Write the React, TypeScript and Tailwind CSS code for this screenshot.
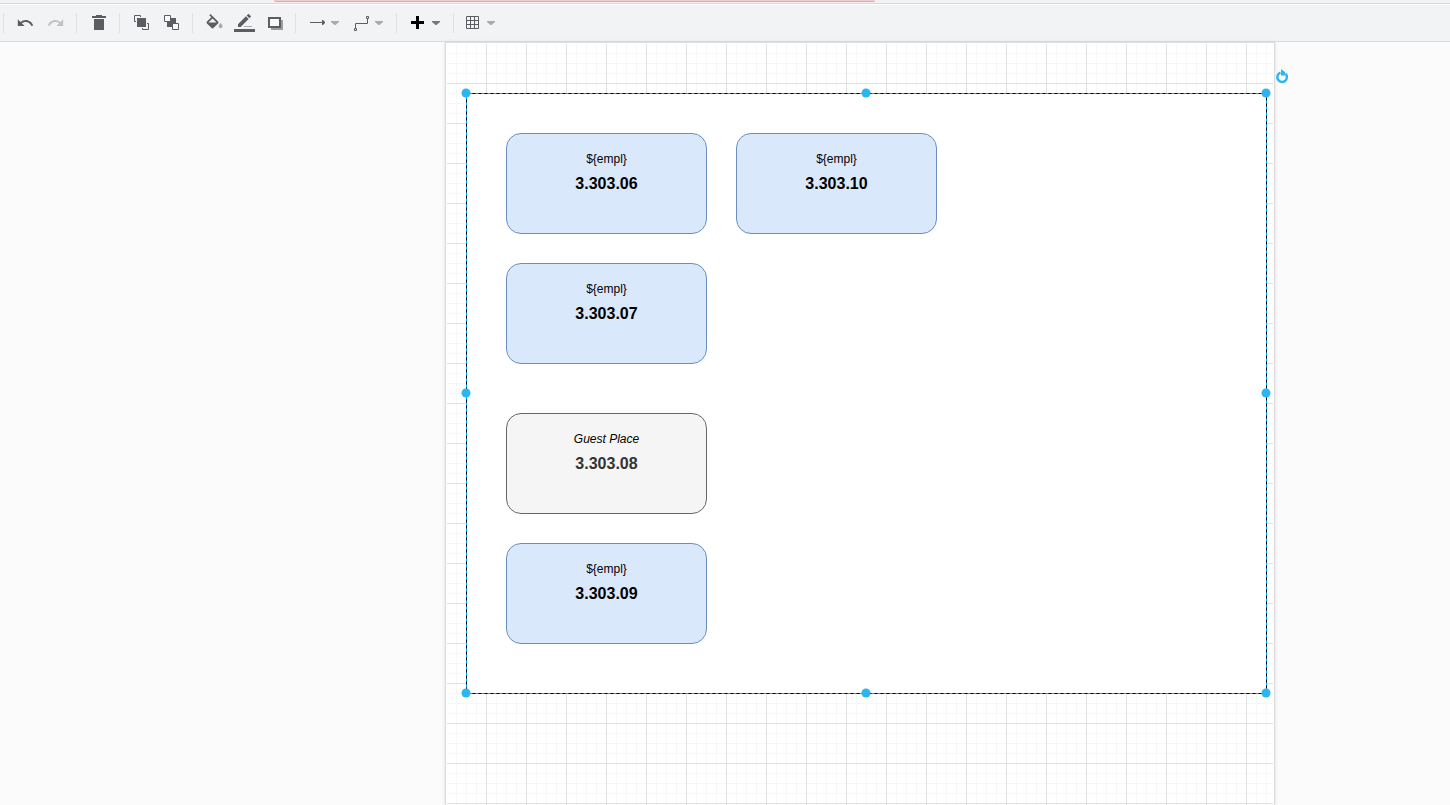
import React from "react";

const INK = "#5c5d60";
const MUTED = "#a9aaac";

type ToolProps = {
  label: string;
  x: number;
  wide?: boolean;
  disabled?: boolean;
  children: React.ReactNode;
};

// Icons share one coordinate system: x runs along the toolbar, y from the top of the window.
function Tool({ label, x, wide, disabled, children }: ToolProps) {
  const width = wide ? 44 : 30;
  return (
    <button
      type="button"
      aria-label={label}
      title={label}
      disabled={disabled}
      className={wide ? "h-[30px] w-11 shrink-0" : "h-[30px] w-[30px] shrink-0"}
    >
      <svg viewBox={`${x} 8 ${width} 30`} className="block h-full w-full" fill={INK}>
        {children}
      </svg>
    </button>
  );
}

function Divider() {
  return <span className="ml-[5px] mr-[7px] h-5 w-px shrink-0 bg-[#dfe0e2]" />;
}

function Caret({ x, color = MUTED }: { x: number; color?: string }) {
  return <path d={`M${x} 21h8v1l-3.5 3h-1l-3.5-3z`} fill={color} />;
}

function Toolbar() {
  return (
    <div
      role="toolbar"
      aria-label="Format"
      className="flex h-[37px] items-center border-b border-[#d8d9dc] bg-[#f1f3f4] pl-[3px]"
    >
      <span className="mr-[7px] h-5 w-px shrink-0 bg-[#dfe0e2]" />
      <Tool label="Undo" x={11}>
        <path
          transform="translate(16.3 14) scale(.75)"
          d="M12.5 8c-2.65 0-5.05.99-6.9 2.6L2 7v9h9l-3.62-3.62c1.39-1.16 3.16-1.88 5.12-1.88 3.54 0 6.55 2.31 7.6 5.5l2.37-.78C21.08 11.03 17.15 8 12.5 8z"
        />
      </Tool>
      <Tool label="Redo" x={41} disabled>
        <path
          transform="translate(46.7 14) scale(.75)"
          fill="#c1c2c4"
          d="M18.4 10.6C16.55 8.99 14.15 8 11.5 8c-4.65 0-8.58 3.03-9.96 7.22L3.9 16c1.05-3.19 4.05-5.5 7.6-5.5 1.95 0 3.73.72 5.12 1.88L13 16h9V7l-3.6 3.6z"
        />
      </Tool>
      <Divider />
      <Tool label="Delete" x={84}>
        <path d="M96 16v-1h6v1h4v2H92v-2zM94 19h10v11H94z" />
      </Tool>
      <Divider />
      <Tool label="To Front" x={127}>
        <path d="M137 18h9v9h-9z" />
        <path
          d="M140.500 17v-1.500h-6v6h1.500M147 23.500h1.500v6h-6V28"
          fill="none"
          stroke={INK}
        />
      </Tool>
      <Tool label="To Back" x={157}>
        <path d="M167 18h9v9h-9z" />
        <path d="M164.500 15.500h6v6h-6zM172.500 23.500h6v6h-6z" fill="#f8f9fa" stroke={INK} />
      </Tool>
      <Divider />
      <Tool label="Fill Color" x={200}>
        <g transform="translate(204 14) scale(.85)">
          <path d="M16.56 8.94L7.62 0 6.21 1.41l2.38 2.38-5.15 5.15c-.59.59-.59 1.54 0 2.12l5.5 5.5c.29.29.68.44 1.06.44s.77-.15 1.06-.44l5.5-5.5c.59-.58.59-1.53 0-2.12zM5.21 10L10 5.21 14.79 10H5.21z" />
          <path
            fill={MUTED}
            d="M19.500 10.500s-2.400 2.400-2.400 4c0 1.300 1.100 2.200 2.400 2.200s2.400-.9 2.400-2.200c0-1.600-2.400-4-2.400-4z"
          />
        </g>
      </Tool>
      <Tool label="Line Color" x={230}>
        <path
          transform="translate(235.800 11.900) scale(.72)"
          d="M3 17.250V21h3.750L17.810 9.940l-3.750-3.750L3 17.250zM20.710 7.040a1 1 0 0 0 0-1.410l-2.340-2.340a1 1 0 0 0-1.410 0l-1.830 1.830 3.750 3.750 1.830-1.830z"
        />
        <path d="M244 26h8v1h-8z" fill={MUTED} />
        <path d="M234 29h21v3h-21z" />
      </Tool>
      <Tool label="Shadow" x={260}>
        <path d="M271 20h12v10h-12z" fill="#9c9d9f" />
        <path d="M269 18h11v9h-11z" fill="#f8f9fa" stroke={INK} strokeWidth="2" />
      </Tool>
      <Divider />
      <Tool label="Connection" x={303} wide>
        <path d="M310 22h12v-2h1l2 2v1l-2 2h-1v-2h-12z" />
        <Caret x={331} />
      </Tool>
      <Tool label="Waypoints" x={347} wide>
        <path
          d="M354.500 28.500h2v2h-2zM355.500 28v-4.500h12V19M366.500 16.500h2v2h-2z"
          fill="none"
          stroke={INK}
        />
        <Caret x={375} />
      </Tool>
      <Divider />
      <Tool label="Insert" x={404} wide>
        <path d="M416 16h3v5h5v3h-5v5h-3v-5h-5v-3h5z" fill="#000" />
        <Caret x={432} color="#77787a" />
      </Tool>
      <Divider />
      <Tool label="Table" x={461} wide>
        <path
          d="M466.500 16.500h12v12h-12zM470.500 16v12M474.500 16v12M466 20.500h12M466 24.500h12"
          fill="none"
          stroke={INK}
        />
        <Caret x={487} />
      </Tool>
    </div>
  );
}

type Place = { code: string; title: string; guest?: boolean; position: string };

const places: Place[] = [
  { code: "3.303.06", title: "${empl}", position: "left-10 top-10" },
  { code: "3.303.10", title: "${empl}", position: "left-[270px] top-10" },
  { code: "3.303.07", title: "${empl}", position: "left-10 top-[170px]" },
  { code: "3.303.08", title: "Guest Place", guest: true, position: "left-10 top-80" },
  { code: "3.303.09", title: "${empl}", position: "left-10 top-[450px]" },
];

function PlaceCard({ place }: { place: Place }) {
  const tone = place.guest
    ? "border-[#666666] bg-[#f5f5f5] text-[#333333]"
    : "border-[#6c8ebf] bg-[#dae8fc] text-black";
  return (
    <div
      className={`absolute flex h-[101px] w-[201px] flex-col items-center gap-[9px] rounded-[15px] border pt-[18px] ${tone} ${place.position}`}
    >
      <span
        className={
          place.guest
            ? "text-[12px] leading-[14px] text-black italic"
            : "text-[12px] leading-[14px]"
        }
      >
        {place.title}
      </span>
      <span className="text-[16px] leading-[18px] font-bold">{place.code}</span>
    </div>
  );
}

const handles = [
  "left-0 top-0",
  "left-1/2 top-0",
  "left-full top-0",
  "left-0 top-1/2",
  "left-full top-1/2",
  "left-0 top-full",
  "left-1/2 top-full",
  "left-full top-full",
];

function Selection() {
  return (
    <div className="absolute left-[19px] top-[49px] h-[600px] w-[800px] bg-white">
      {places.map((place) => (
        <PlaceCard key={place.code} place={place} />
      ))}
      <svg viewBox="0 0 801 601" className="absolute left-0 top-0 h-[601px] w-[801px]" fill="none">
        <rect x=".5" y=".5" width="800" height="600" stroke="#00a8ff" />
        <path
          d="M.5.5h800v600M.5.5v600h800"
          stroke="#000"
          strokeDasharray="3 3"
        />
      </svg>
      {handles.map((position) => (
        <span
          key={position}
          className={`absolute size-[9px] -translate-x-1/2 -translate-y-1/2 rounded-full bg-[#29b6f2] ${position}`}
        />
      ))}
      <button
        type="button"
        aria-label="Rotate"
        className="absolute -top-6 left-[809px] h-[15px] w-[14px]"
      >
        <svg viewBox="0 0 14 15" className="block h-full w-full">
          <path
            d="M10.500 4.700A4.800 4.800 0 1 1 5.500 3.600"
            fill="none"
            stroke="#29b6f2"
            strokeWidth="2.400"
          />
          <path d="M6 0l4 3v3.500H6z" fill="#29b6f2" />
        </svg>
      </button>
    </div>
  );
}

export default function App() {
  return (
    <div className="flex h-screen min-h-[720px] flex-col overflow-hidden bg-[#fbfbfb] font-['Liberation_Sans',Arial,sans-serif]">
      <header>
        <div className="flex h-1 items-start border-b border-[#d8d9dc] bg-[#f1f3f4] pl-[18.9%]">
          <span className="h-0.5 w-[601px] rounded-b-xs border-b border-[#e5a3aa] bg-[#f3cdd0]" />
        </div>
        <div className="h-px bg-white" />
        <Toolbar />
      </header>
      <main className="flex flex-1">
        <div className="mr-[175px] ml-[445px] flex flex-1 border border-b-0 border-[#dddddd] bg-white p-px pb-0 shadow-[0_0_3px_#d9d9d9]">
          <div className="relative flex-1 bg-[repeating-linear-gradient(to_right,transparent_0_39px,#e0e0e0_39px_40px),repeating-linear-gradient(to_bottom,transparent_0_39px,#e0e0e0_39px_40px),repeating-linear-gradient(to_right,transparent_0_9px,#f7f7f7_9px_10px),repeating-linear-gradient(to_bottom,transparent_0_9px,#f7f7f7_9px_10px)]">
            <Selection />
          </div>
        </div>
      </main>
    </div>
  );
}
